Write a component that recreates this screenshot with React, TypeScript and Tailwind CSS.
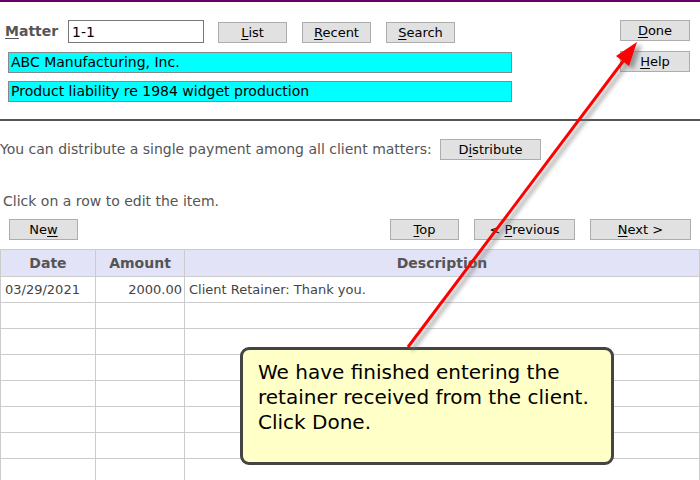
import type { ReactNode } from 'react';

const FONT = { fontFamily: '"DejaVu Sans", Verdana, sans-serif' };

function Btn({ children, className = '' }: { children: ReactNode; className?: string }) {
  return (
    <button
      className={`h-[21px] border border-[#adadad] bg-[#e1e1e1] text-[13px] leading-[19px] text-black ${className}`}
    >
      {children}
    </button>
  );
}

function U({ children }: { children: ReactNode }) {
  return <span className="underline underline-offset-2">{children}</span>;
}

const ROWS = [
  { date: '03/29/2021', amount: '2000.00', desc: 'Client Retainer: Thank you.' },
  ...Array.from({ length: 8 }, () => ({ date: '', amount: '', desc: '' })),
];

export default function App() {
  return (
    <div className="relative h-[480px] w-[700px] overflow-hidden bg-white" style={FONT}>
      <div className="h-[2px] bg-[#660066]" />

      {/* header form */}
      <div className="flex h-[117px]">
        <div className="w-[520px]">
          <div className="flex items-center pt-[18px]">
            <span className="ml-[5px] w-[63px] text-[14px] font-bold text-[#555]">
              <U>M</U>atter
            </span>
            <input
              defaultValue="1-1"
              className="h-[23px] w-[136px] border border-[#777] px-[3px] text-[14px] text-black outline-none"
              style={FONT}
            />
            <div className="ml-[14px] mt-[2px] flex gap-[15px]">
              <Btn className="w-[69px]"><U>L</U>ist</Btn>
              <Btn className="w-[69px]"><U>R</U>ecent</Btn>
              <Btn className="w-[69px]"><U>S</U>earch</Btn>
            </div>
          </div>
          <div className="ml-[8px] mt-[9px] h-[21px] w-[504px] border border-[#888] bg-[#00ffff] pl-[2px] text-[14px] leading-[19px] text-black">
            ABC Manufacturing, Inc.
          </div>
          <div className="ml-[8px] mt-[8px] h-[21px] w-[504px] border border-[#888] bg-[#00ffff] pl-[2px] text-[14px] leading-[19px] text-black">
            Product liability re 1984 widget production
          </div>
        </div>
        <div className="ml-[100px] flex flex-col gap-[10px] pt-[18px]">
          <Btn className="w-[70px]"><U>D</U>one</Btn>
          <Btn className="w-[70px]"><U>H</U>elp</Btn>
        </div>
      </div>

      <div className="h-[2px] bg-[#555]" />

      <div className="mt-[18px] flex items-center">
        <span className="text-[14px] text-[#555]">
          You can distribute a single payment among all client matters:
        </span>
        <Btn className="ml-auto mr-[159px] w-[101px]">D<U>i</U>stribute</Btn>
      </div>

      <div className="mt-[31px] pl-[3px] text-[14px] text-[#555]">Click on a row to edit the item.</div>

      <div className="mt-[7px] flex">
        <Btn className="ml-[9px] w-[69px]">Ne<U>w</U></Btn>
        <div className="ml-auto mr-[9px] flex gap-[15px]">
          <Btn className="w-[69px]"><U>T</U>op</Btn>
          <Btn className="w-[101px]">&lt; <U>P</U>revious</Btn>
          <Btn className="w-[101px]"><U>N</U>ext &gt;</Btn>
        </div>
      </div>

      <table className="mt-[9px] w-[700px] table-fixed border-collapse text-[13px] text-[#444]">
        <colgroup>
          <col className="w-[95px]" />
          <col className="w-[89px]" />
          <col />
        </colgroup>
        <thead>
          <tr className="h-[27px] bg-[#e3e3f7] text-[14px] font-bold text-[#555]">
            <th className="border border-[#ccc] font-bold">Date</th>
            <th className="border border-[#ccc] font-bold">Amount</th>
            <th className="border border-[#ccc] font-bold">Description</th>
          </tr>
        </thead>
        <tbody>
          {ROWS.map((r, i) => (
            <tr key={i} className="h-[26px]">
              <td className="border border-[#ccc] pl-[4px]">{r.date}</td>
              <td className="border border-[#ccc] pr-[2px] text-right">{r.amount}</td>
              <td className="border border-[#ccc] pl-[4px]">{r.desc}</td>
            </tr>
          ))}
        </tbody>
      </table>

      {/* tutorial callout */}
      <div className="absolute left-[240px] top-[347px] h-[118px] w-[374px] rounded-[9px] border-[3px] border-[#444] bg-[#ffffc8] pl-[15px] pt-[10px] text-[20px] leading-[25px] text-black">
        We have finished entering the
        <br />
        retainer received from the client.
        <br />
        Click Done.
      </div>

      <svg className="pointer-events-none absolute left-0 top-0" width="700" height="480">
        <defs>
          <filter id="sh" x="-20%" y="-20%" width="140%" height="140%">
            <feGaussianBlur stdDeviation="2" />
          </filter>
        </defs>
        <g transform="translate(4 3)" fill="#777" stroke="#777" opacity="0.7" filter="url(#sh)">
          <line x1="408" y1="347" x2="624" y2="60" strokeWidth="3" />
          <polygon points="637,42 629,66 616,56" />
        </g>
        <line x1="408" y1="347" x2="624" y2="60" stroke="#ff0000" strokeWidth="3" />
        <polygon points="637,42 629,66 616,56" fill="#ff0000" />
      </svg>
    </div>
  );
}
